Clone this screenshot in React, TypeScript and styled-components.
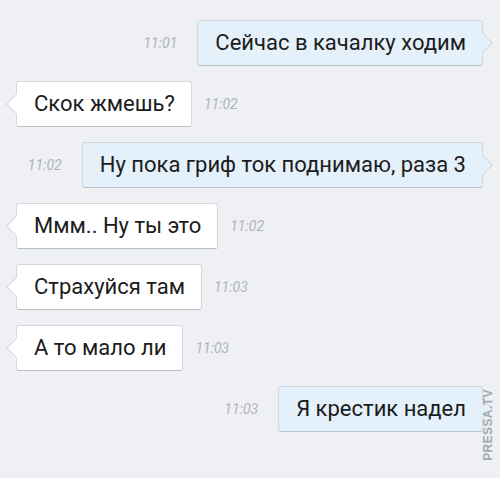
import React from 'react'
import styled, { createGlobalStyle, css } from 'styled-components'

const Global = createGlobalStyle`
  html, body {
    margin: 0;
    padding: 0;
    background: #eef0f3;
  }
  body {
    font-family: Roboto, "Noto Sans", "Liberation Sans", sans-serif;
  }
`

type Side = 'in' | 'out'

const messages: { side: Side; text: string; time: string }[] = [
  { side: 'out', text: 'Сейчас в качалку ходим', time: '11:01' },
  { side: 'in', text: 'Скок жмешь?', time: '11:02' },
  { side: 'out', text: 'Ну пока гриф ток поднимаю, раза 3', time: '11:02' },
  { side: 'in', text: 'Ммм.. Ну ты это', time: '11:02' },
  { side: 'in', text: 'Страхуйся там', time: '11:03' },
  { side: 'in', text: 'А то мало ли', time: '11:03' },
  { side: 'out', text: 'Я крестик надел', time: '11:03' },
]

export default function App() {
  return (
    <Screen>
      <Global />
      <Chat>
        {messages.map((m, i) => (
          <Row key={i} $side={m.side}>
            <Bubble $side={m.side}>{m.text}</Bubble>
            <Time>{m.time}</Time>
          </Row>
        ))}
      </Chat>
      <Watermark>PRESSA.TV</Watermark>
    </Screen>
  )
}

const Screen = styled.div`
  position: relative;
  width: 500px;
  height: 478px;
  overflow: hidden;
  background: #eef0f3;
`

const Chat = styled.div`
  display: flex;
  flex-direction: column;
  gap: 15px;
  padding: 20px 17px 0 16px;
`

const Row = styled.div<{ $side: Side }>`
  display: flex;
  align-items: center;
  height: 46px;
  ${(p) =>
    p.$side === 'out'
      ? css`
          flex-direction: row-reverse;
          gap: 20px;
        `
      : css`
          flex-direction: row;
          gap: 12px;
        `}
`

const Bubble = styled.div<{ $side: Side }>`
  position: relative;
  box-sizing: border-box;
  height: 46px;
  line-height: 44px;
  padding: 0 16px 0 17px;
  font-size: 22px;
  color: #1c1c1c;
  border: 1px solid #d3d8de;
  border-bottom-color: #b9bfc7;
  border-radius: 3px;
  background: ${(p) => (p.$side === 'out' ? '#e4f0fa' : '#ffffff')};
  white-space: nowrap;

  &::before {
    content: '';
    position: absolute;
    top: 15px;
    width: 13px;
    height: 13px;
    background: inherit;
    transform: rotate(45deg);
    ${(p) =>
      p.$side === 'out'
        ? css`
            right: -8px;
            border-top: 1px solid #d3d8de;
            border-right: 1px solid #d3d8de;
          `
        : css`
            left: -8px;
            border-bottom: 1px solid #d3d8de;
            border-left: 1px solid #d3d8de;
          `}
  }
`

const Time = styled.span`
  font-size: 14px;
  font-style: italic;
  font-weight: 400;
  color: #b0b4ba;
`

const Watermark = styled.div`
  position: absolute;
  left: 446px;
  top: 418px;
  width: 84px;
  text-align: center;
  transform: rotate(-90deg);
  font-family: "Liberation Sans", Arial, sans-serif;
  font-size: 12px;
  font-weight: bold;
  letter-spacing: 0.4px;
  color: #a3a8af;
`
